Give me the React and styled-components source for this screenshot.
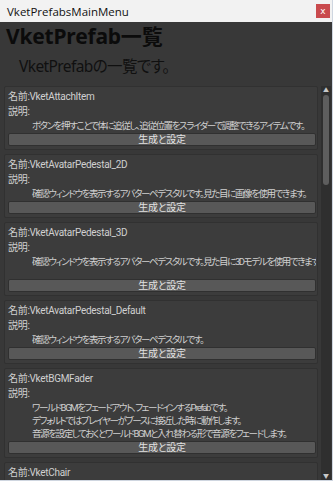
import React from "react";
import styled, { createGlobalStyle } from "styled-components";

const GlobalStyle = createGlobalStyle`
  html, body {
    margin: 0;
    padding: 0;
    background: #383838;
  }
  body {
    font-family: Roboto, "Noto Sans CJK JP", sans-serif;
  }
`;

const Window = styled.div`
  width: 333px;
  height: 481px;
  display: flex;
  flex-direction: column;
  background: #383838;
  box-sizing: border-box;
  border-right: 1px solid #cfd6e0;
  border-bottom: 1px solid #cfd6e0;
  overflow: hidden;
`;

const TitleBar = styled.div`
  height: 22px;
  flex: none;
  display: flex;
  align-items: center;
  justify-content: space-between;
  background: #f2f2f2;
  padding: 0 2px 0 7px;
  font-family: "Open Sans", "Liberation Sans", sans-serif;
  font-size: 11.5px;
  color: #111;
`;

const CloseButton = styled.div`
  width: 14px;
  height: 14px;
  background: #c94a4d;
  color: #fff;
  font-size: 9px;
  font-family: "DejaVu Sans", sans-serif;
  display: flex;
  align-items: center;
  justify-content: center;
  line-height: 1;
`;

const Heading = styled.h1`
  margin: 0 0 0 6px;
  font-family: "Noto Sans", "Noto Sans CJK JP", sans-serif;
  font-size: 21px;
  font-weight: 700;
  line-height: 28px;
  letter-spacing: -0.2px;
  color: #0b0b0b;
`;

const Subtitle = styled.p`
  margin: 5px 0 0 19px;
  font-family: "Noto Sans", "Noto Sans CJK JP", sans-serif;
  font-size: 15.5px;
  line-height: 22px;
  letter-spacing: -0.6px;
  color: #101010;
  font-feature-settings: "palt";
`;

const ScrollArea = styled.div`
  margin-top: 9px;
  flex: 1;
  min-height: 0;
  display: flex;
  overflow: hidden;
`;

const List = styled.div`
  flex: 1;
  min-width: 0;
  display: flex;
  flex-direction: column;
  gap: 4px;
  padding: 0 3px 0 4px;
`;

const Card = styled.div`
  flex: none;
  background: #3c3c3c;
  border: 1px solid #313131;
  border-radius: 2px;
  padding: 2px 1px 3px 3px;
  color: #d0d0d0;
  font-size: 10px;
  font-feature-settings: "palt";
`;

const Line = styled.div`
  line-height: 15px;
  white-space: nowrap;
  letter-spacing: -0.3px;
`;

const Description = styled.div`
  font-size: 9.5px;
  line-height: 13px;
  padding-left: 24px;
  padding-bottom: ${(p) => (p.$extra ? "10px" : "0")};
  white-space: pre;
  overflow: hidden;
  letter-spacing: -1.4px;
`;

const ActionButton = styled.div`
  margin-top: 1px;
  height: 11px;
  background: #585858;
  border: 1px solid #303030;
  border-radius: 2px;
  color: #e2e2e2;
  font-size: 10px;
  line-height: 11px;
  letter-spacing: -0.3px;
  text-align: center;
`;

const ScrollBar = styled.div`
  width: 10px;
  flex: none;
  margin-right: 1px;
  background: #2f2f2f;
  display: flex;
  flex-direction: column;
  align-items: center;
`;

const Arrow = styled.div`
  height: 8px;
  width: 100%;
  display: flex;
  align-items: center;
  justify-content: center;
  color: #c8c8c8;
  font-size: 6px;
  line-height: 1;
  flex: none;
`;

const Track = styled.div`
  flex: 1;
  width: 100%;
  display: flex;
  justify-content: center;
`;

const Thumb = styled.div`
  margin-top: 1px;
  width: 6px;
  height: 90px;
  border-radius: 3px;
  background: #5e5e5e;
`;

const prefabs = [
  {
    name: "VketAttachItem",
    desc: "ボタンを押すことで体に追従し、追従位置をスライダーで調整できるアイテムです。",
  },
  {
    name: "VketAvatarPedestal_2D",
    desc: "確認ウィンドウを表示するアバターペデスタルです。見た目に画像を使用できます。",
  },
  {
    name: "VketAvatarPedestal_3D",
    desc: "確認ウィンドウを表示するアバターペデスタルです。見た目に3Dモデルを使用できます。",
    extra: true,
  },
  {
    name: "VketAvatarPedestal_Default",
    desc: "確認ウィンドウを表示するアバターペデスタルです。",
  },
  {
    name: "VketBGMFader",
    desc:
      "ワールドBGMをフェードアウト、フェードインするPrefabです。\nデフォルトではプレイヤーがブースに接近した時に動作します。\n音源を設定しておくとワールドBGMと入れ替わる形で音源をフェードします。",
  },
  {
    name: "VketChair",
    desc: "",
  },
];

export default function App() {
  return (
    <>
      <GlobalStyle />
      <Window>
        <TitleBar>
          <span>VketPrefabsMainMenu</span>
          <CloseButton>x</CloseButton>
        </TitleBar>
        <Heading>VketPrefab一覧</Heading>
        <Subtitle>VketPrefabの一覧です。</Subtitle>
        <ScrollArea>
          <List>
            {prefabs.map((p) => (
              <Card key={p.name}>
                <Line>名前:{p.name}</Line>
                <Line>説明:</Line>
                <Description $extra={p.extra}>{p.desc}</Description>
                <ActionButton>生成と設定</ActionButton>
              </Card>
            ))}
          </List>
          <ScrollBar>
            <Arrow>▲</Arrow>
            <Track>
              <Thumb />
            </Track>
            <Arrow>▼</Arrow>
          </ScrollBar>
        </ScrollArea>
      </Window>
    </>
  );
}
